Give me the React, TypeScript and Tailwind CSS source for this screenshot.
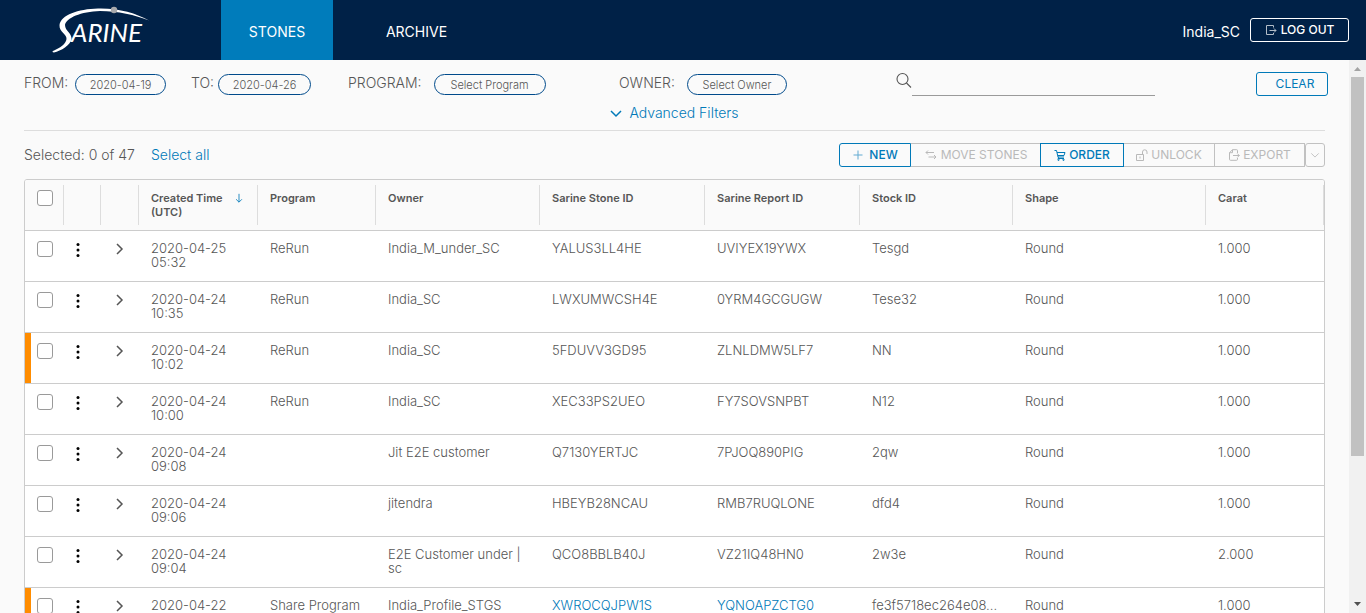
import React from "react";

type Stone = {
  created: string;
  program: string;
  owner: string;
  stoneId: string;
  reportId: string;
  stock: string;
  carat: string;
  flagged?: boolean;
  linked?: boolean;
};

const stones: Stone[] = [
  { created: "2020-04-25 05:32", program: "ReRun", owner: "India_M_under_SC", stoneId: "YALUS3LL4HE", reportId: "UVIYEX19YWX", stock: "Tesgd", carat: "1.000" },
  { created: "2020-04-24 10:35", program: "ReRun", owner: "India_SC", stoneId: "LWXUMWCSH4E", reportId: "0YRM4GCGUGW", stock: "Tese32", carat: "1.000" },
  { created: "2020-04-24 10:02", program: "ReRun", owner: "India_SC", stoneId: "5FDUVV3GD95", reportId: "ZLNLDMW5LF7", stock: "NN", carat: "1.000", flagged: true },
  { created: "2020-04-24 10:00", program: "ReRun", owner: "India_SC", stoneId: "XEC33PS2UEO", reportId: "FY7SOVSNPBT", stock: "N12", carat: "1.000" },
  { created: "2020-04-24 09:08", program: "", owner: "Jit E2E customer", stoneId: "Q7130YERTJC", reportId: "7PJOQ890PIG", stock: "2qw", carat: "1.000" },
  { created: "2020-04-24 09:06", program: "", owner: "jitendra", stoneId: "HBEYB28NCAU", reportId: "RMB7RUQLONE", stock: "dfd4", carat: "1.000" },
  { created: "2020-04-24 09:04", program: "", owner: "E2E Customer under |\nsc", stoneId: "QCO8BBLB40J", reportId: "VZ21IQ48HN0", stock: "2w3e", carat: "2.000" },
  { created: "2020-04-22", program: "Share Program", owner: "India_Profile_STGS", stoneId: "XWROCQJPW1S", reportId: "YQNOAPZCTG0", stock: "fe3f5718ec264e08...", carat: "1.000", flagged: true, linked: true },
];

const headings = ["Program", "Owner", "Sarine Stone ID", "Sarine Report ID", "Stock ID", "Shape", "Carat"];

function Logo() {
  return (
    <svg width="104" height="48" viewBox="0 0 104 48" role="img" aria-label="Sarine">
      <path
        d="M1 45 C8 42 14 38 14.500 33 C15 28 7 26 7.500 19 C9 9 26 3 46 2.500 C66 2 84 7 97 14.500 C83 9 66 5 48 5 C29 5.500 14 12 13 19 C13 25 20 27 19.500 33 C18.500 39 9 45 2 46.500 C0.500 46.500 0 45.500 1 45 Z"
        fill="#fff"
      />
      <text x="19" y="36" fontFamily="Lato, 'Liberation Sans', sans-serif" fontStyle="italic" fontWeight="400" fontSize="26" fill="#fff">
        ARINE
      </text>
      <circle cx="62" cy="4" r="3.200" fill="#a7a9ac" />
    </svg>
  );
}

function Icon({ children, size = 12, className = "" }: { children: React.ReactNode; size?: number; className?: string }) {
  return (
    <svg width={size} height={size} viewBox="0 0 12 12" fill="none" stroke="currentColor" strokeWidth="1" className={`shrink-0 ${className}`} aria-hidden="true">
      {children}
    </svg>
  );
}

const LogoutPath = () => <path d="M8.500 3.500V1.500H1.500V10.500H8.500V9M4.500 6.500H11M9 4.500L11 6.500L9 8.500" />;
const ExportPath = () => <path d="M9.500 4V1.500Q9.500 0.700 8.700 0.700H4.500L1.500 3.700V10.300Q1.500 11.300 2.500 11.300H8.500Q9.500 11.300 9.500 10.300V9M4.500 0.700V3.700H1.500M5 6.500H11.300M9.300 4.500L11.300 6.500L9.300 8.500" />;

function Checkbox({ label }: { label: string }) {
  return (
    <input
      type="checkbox"
      aria-label={label}
      className="block size-4 appearance-none rounded-[3px] border border-[#9a9a9a] bg-white checked:bg-[#0079b8]"
    />
  );
}

const pill = "h-[21px] rounded-full border border-[#004a8b] bg-transparent text-center text-[11px] text-[#565656]";
const tool = "flex h-6 items-center justify-center border text-xs";
const off = "border-[#c1c1c1] font-normal text-[#b9b9b9]";
const on = "border-[#0079b8] font-medium text-[#0079b8]";

export default function App() {
  return (
    <div className="flex h-screen flex-col overflow-hidden bg-[#fafafa] font-['Inter','Liberation_Sans',sans-serif] font-light text-[#565656]">
      <header className="flex h-15 shrink-0 items-center bg-[#002147] text-sm text-white">
        <div className="w-[221px] shrink-0 pl-[52px]">
          <Logo />
        </div>
        <nav className="flex h-full flex-1 font-normal">
          <a href="#stones" className="flex w-28 items-center justify-center bg-[#007cbb] pt-1">STONES</a>
          <a href="#archive" className="flex w-[167px] items-center justify-center pt-1">ARCHIVE</a>
        </nav>
        <span className="pt-1 font-normal">India_SC</span>
        <button className="mr-[17px] ml-[10px] flex h-6 w-[99px] items-center justify-center gap-1 rounded-[3px] border border-white text-xs font-medium">
          <Icon className="opacity-70"><LogoutPath /></Icon>
          LOG OUT
        </button>
      </header>

      <div className="flex min-h-0 flex-1">
        <main className="min-w-0 flex-1 overflow-y-auto pr-6 pl-6 [scrollbar-width:none]">
          <form className="grid grid-cols-[167px_157px_271px_277px_1fr_auto] items-start pt-3 text-sm leading-[18px]">
            <div className="flex items-start gap-[6px] pt-[2px]">
              <label htmlFor="from" className="w-[45px]">FROM:</label>
              <input id="from" defaultValue="2020-04-19" className={`${pill} w-[91px]`} />
            </div>
            <div className="flex items-start gap-1 pt-[2px]">
              <label htmlFor="to">TO:</label>
              <input id="to" defaultValue="2020-04-26" className={`${pill} w-[93px]`} />
            </div>
            <div className="flex items-start gap-3 pt-[2px]">
              <label htmlFor="program">PROGRAM:</label>
              <button type="button" id="program" className={`${pill} w-28`}>Select Program</button>
            </div>
            <div className="flex items-start gap-3 pt-[2px]">
              <label htmlFor="owner">OWNER:</label>
              <button type="button" id="owner" className={`${pill} w-[100px]`}>Select Owner</button>
            </div>
            <div className="flex h-6 items-start">
              <svg width="16" height="16" viewBox="0 0 16 16" fill="none" stroke="#565656" strokeWidth="1.100" aria-hidden="true">
                <circle cx="6.500" cy="7" r="5.500" />
                <path d="M10.500 11L15 15.500" />
              </svg>
              <input type="search" aria-label="Search" className="h-6 w-[243px] appearance-none border-b border-[#9a9a9a] bg-transparent outline-none" />
            </div>
            <button type="reset" className="-mr-[3px] h-6 w-[72px] rounded-[3px] border border-[#0079b8] pl-[6px] text-xs font-normal text-[#0079b8]">CLEAR</button>
          </form>

          <div className="flex justify-center border-b border-[#dddddd] pt-[6px] pb-[6px]">
            <button className="flex h-[22px] items-center gap-[7px] text-sm text-[#0079b8]">
              <Icon><path d="M1 4L6 9L11 4" strokeWidth="1.500" /></Icon>
              Advanced Filters
            </button>
          </div>

          <div className="flex items-center justify-between pt-3 pb-3">
            <div className="flex gap-4 text-sm">
              <span>Selected: 0 of 47</span>
              <button className="text-[#0079b8]">Select all</button>
            </div>
            <div className="flex">
              <button className={`${tool} ${on} z-10 w-[72px] gap-[5px] rounded-l-[3px]`}>
                <Icon className="opacity-60"><path d="M6 1.500V10.500M1.500 6H10.500" /></Icon>
                NEW
              </button>
              <button disabled className={`${tool} ${off} w-[130px] gap-1 border-x-0`}>
                <Icon><path d="M3 1.500L1 3.500L3 5.500M1 3.500H9M9 6L11 8L9 10M11 8H3.500" /></Icon>
                MOVE STONES
              </button>
              <button className={`${tool} ${on} z-10 -ml-px w-[84px] gap-[3px]`}>
                <Icon><path d="M0.500 1.500H2.500L4 8H10M3 3.500H11L10 6.500H4M4.500 8L4 9.500H10" /><circle cx="4.500" cy="10.800" r="0.700" /><circle cx="9.500" cy="10.800" r="0.700" /></Icon>
                ORDER
              </button>
              <button disabled className={`${tool} ${off} w-[91px] gap-[3px] border-l-0`}>
                <Icon><path d="M0.500 5.500H7.500V11.500H0.500ZM4 7.500V9.500M6.500 5.500V3Q6.500 0.800 8.700 0.800Q11 0.800 11 3V5" /></Icon>
                UNLOCK
              </button>
              <button disabled className={`${tool} ${off} w-[90px] gap-[3px] border-l-0`}>
                <Icon><ExportPath /></Icon>
                EXPORT
              </button>
              <button disabled aria-label="More export options" className={`${tool} ${off} w-5 rounded-[3px]`}>
                <Icon size={10}><path d="M1.500 4L6 8.500L10.500 4" /></Icon>
              </button>
            </div>
          </div>

          <div className="overflow-hidden rounded-t-[3px] border border-[#cccccc] bg-white">
            <table className="w-full table-fixed border-collapse text-left text-[13px] leading-[14px]">
              <colgroup>
                <col className="w-[39px]" />
                <col className="w-[37px]" />
                <col className="w-[38px]" />
                <col className="w-[119px]" />
                <col className="w-[118px]" />
                <col className="w-[164px]" />
                <col className="w-[165px]" />
                <col className="w-[155px]" />
                <col className="w-[153px]" />
                <col className="w-[193px]" />
                <col />
              </colgroup>
              <thead className="bg-[#fafafa] text-[11px]">
                <tr className="h-[50px] border-b border-[#cccccc] align-top">
                  <th className="pt-[5px]">
                    <div className="h-10 border-r border-[#dddddd] pt-[5px] pl-3"><Checkbox label="Select all stones" /></div>
                  </th>
                  <th className="pt-[5px]"><div className="h-10 border-r border-[#dddddd]" /></th>
                  <th className="pt-[5px]"><div className="h-10 border-r border-[#dddddd]" /></th>
                  <th className="pt-[5px] font-semibold">
                    <div className="flex h-10 justify-between border-r border-[#dddddd] pt-[6px] pr-[13px] pl-3">
                      <span>Created Time (UTC)</span>
                      <Icon className="mt-[2px] text-[#0079b8]" size={10}><path d="M6 1V11M2.500 7.500L6 11L9.500 7.500" /></Icon>
                    </div>
                  </th>
                  {headings.map((h) => (
                    <th key={h} className="pt-[5px] font-semibold">
                      <div className="h-10 border-r border-[#dddddd] pt-[6px] pl-3">{h}</div>
                    </th>
                  ))}
                </tr>
              </thead>
              <tbody>
                {stones.map((s) => (
                  <tr key={s.stoneId} className="h-[51px] border-b border-[#cccccc] align-top">
                    <td className="p-0">
                      <div className={`h-[50px] border-l-[6px] pt-[10px] pl-[6px] ${s.flagged ? "border-[#ff8c00]" : "border-transparent"}`}>
                        <Checkbox label={`Select ${s.stoneId}`} />
                      </div>
                    </td>
                    <td className="pt-[11px] pl-[11px]">
                      <button aria-label="Actions" className="block text-black">
                        <svg width="6" height="16" viewBox="0 0 6 16" fill="currentColor" aria-hidden="true">
                          <circle cx="3" cy="2.500" r="1.500" />
                          <circle cx="3" cy="8" r="1.500" />
                          <circle cx="3" cy="13.500" r="1.500" />
                        </svg>
                      </button>
                    </td>
                    <td className="pt-3 pl-3">
                      <button aria-label="Expand" className="block">
                        <Icon><path d="M4 1L9 6L4 11" strokeWidth="1.500" /></Icon>
                      </button>
                    </td>
                    <td className="pt-[10px] pr-6 pl-3">{s.created}</td>
                    <td className="pt-[10px] pl-3">{s.program}</td>
                    <td className="pt-[10px] pl-3 whitespace-pre-line">{s.owner}</td>
                    <td className="pt-[10px] pl-3">{s.linked ? <a href="#stone" className="text-[#0079b8]">{s.stoneId}</a> : s.stoneId}</td>
                    <td className="pt-[10px] pl-3">{s.linked ? <a href="#report" className="text-[#0079b8]">{s.reportId}</a> : s.reportId}</td>
                    <td className="pt-[10px] pl-3">{s.stock}</td>
                    <td className="pt-[10px] pl-3">Round</td>
                    <td className="pt-[10px] pl-3">{s.carat}</td>
                  </tr>
                ))}
              </tbody>
            </table>
          </div>
        </main>

        <div className="flex w-[17px] shrink-0 flex-col items-center bg-[#f1f1f1]" aria-hidden="true">
          <svg width="17" height="17" viewBox="0 0 17 17" className="shrink-0"><path d="M5 11L8.500 7L12 11Z" fill="#a3a3a3" /></svg>
          <div className="min-h-0 w-full flex-1 px-[2px]"><div className="h-[73%] bg-[#c1c1c1]" /></div>
          <svg width="17" height="17" viewBox="0 0 17 17" className="shrink-0"><path d="M5 6L8.500 10L12 6Z" fill="#505050" /></svg>
        </div>
      </div>
    </div>
  );
}
